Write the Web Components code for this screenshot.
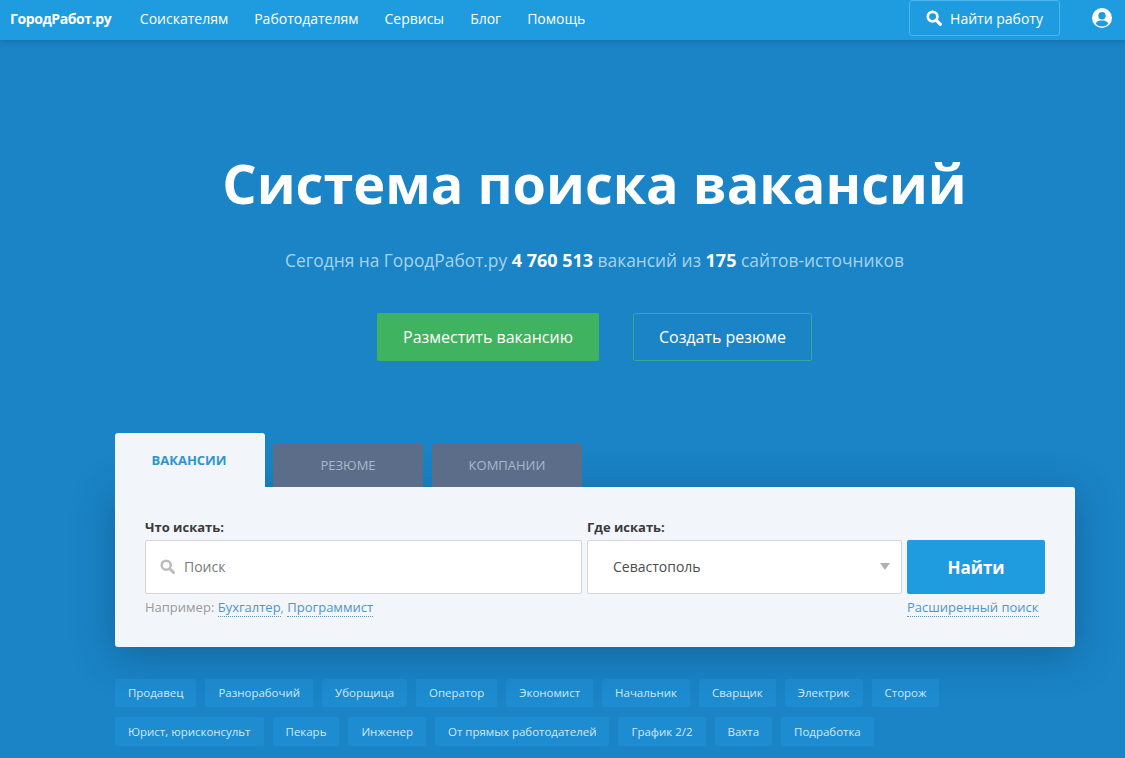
<!DOCTYPE html>
<html lang="ru">
<head>
<meta charset="utf-8">
<title>ГородРабот.ру</title>
<style>
html, body { margin: 0; height: 758px; overflow: hidden; }
body { background: #1a84c6; font-family: "Open Sans", "Noto Sans", sans-serif; color: #fff; }
</style>
</head>
<body>
<gr-header></gr-header>
<gr-hero></gr-hero>
<gr-search></gr-search>
<gr-tags></gr-tags>

<script>
const searchIcon = (size, color) => `<svg width="${size}" height="${size}" viewBox="0 0 16 16" aria-hidden="true"><circle cx="6.6" cy="6.6" r="4.8" fill="none" stroke="${color}" stroke-width="2.7"/><path d="M10.4 10.4L14.4 14.4" stroke="${color}" stroke-width="3.2" stroke-linecap="round"/></svg>`;

customElements.define('gr-header', class extends HTMLElement {
  constructor() {
    super();
    this.attachShadow({ mode: 'open' });
    const links = ['Соискателям', 'Работодателям', 'Сервисы', 'Блог', 'Помощь'];
    this.shadowRoot.innerHTML = `
<style>
:host { display: flex; align-items: center; box-sizing: border-box; height: 40px; padding-bottom: 4px; background: #1f9be0; box-shadow: 0 1px 6px rgba(20,60,100,.35); position: relative; font-size: 14px; }
.logo { font-weight: 700; font-size: 14px; margin-left: 10px; letter-spacing: -.4px; }
nav { display: flex; gap: 26px; margin-left: 28.5px; }
.find { display: flex; align-items: center; justify-content: center; gap: 8px; box-sizing: border-box; width: 151px; height: 36px; margin: 0 32px 0 auto; border: 1px solid #4db4ec; border-radius: 3px; }
.user { margin-right: 13px; display: block; }
</style>
<span class="logo">ГородРабот.ру</span>
<nav>${links.map(l => `<span>${l}</span>`).join('')}</nav>
<span class="find">${searchIcon(16, '#fff')}<span>Найти работу</span></span>
<svg class="user" width="20" height="20" viewBox="0 0 20 20" aria-hidden="true"><circle cx="10" cy="10" r="10" fill="#fff"/><circle cx="10" cy="7.8" r="3.7" fill="#1f9be0"/><path d="M3.6 15.6C5 13 7.6 12.6 10 12.6s5 .4 6.4 3C15 17.6 12.6 18.4 10 18.4s-5-.8-6.4-2.8z" fill="#1f9be0"/></svg>`;
  }
});

customElements.define('gr-hero', class extends HTMLElement {
  constructor() {
    super();
    this.attachShadow({ mode: 'open' });
    this.shadowRoot.innerHTML = `
<style>
:host { display: flex; flex-direction: column; align-items: center; width: 959px; margin-left: 115px; }
h1 { margin: 98px 0 0; font-size: 54px; line-height: 90px; font-weight: 700; white-space: nowrap; }
p { margin: 19px 0 0; font-size: 17.35px; line-height: 26px; color: #a5d4f0; white-space: nowrap; }
b { color: #fff; font-size: 18px; }
.btns { display: flex; gap: 34px; margin-top: 40px; }
.btn { display: flex; align-items: center; justify-content: center; box-sizing: border-box; height: 48px; border-radius: 2px; font-size: 16px; }
.green { width: 222px; background: #3fb35f; }
.line { width: 179px; border: 1px solid #2cb08c; }
</style>
<h1>Система поиска вакансий</h1>
<p>Сегодня на ГородРабот.ру <b>4 760 513</b> вакансий из <b>175</b> сайтов-источников</p>
<div class="btns"><span class="btn green">Разместить вакансию</span><span class="btn line">Создать резюме</span></div>`;
  }
});

customElements.define('gr-search', class extends HTMLElement {
  constructor() {
    super();
    this.attachShadow({ mode: 'open' });
    this.shadowRoot.innerHTML = `
<style>
:host { display: block; width: 960px; margin: 72px 0 0 115px; }
.tabs { display: flex; align-items: flex-end; height: 54px; position: relative; z-index: 1; }
.tab { display: flex; align-items: center; justify-content: center; width: 150px; height: 44px; margin-right: 9px; background: #5c6d8a; color: #a9b8cb; font-size: 13px; border-radius: 3px 3px 0 0; }
.tab.on { height: 54px; margin-right: 8px; padding-right: 2px; box-sizing: border-box; background: #f2f5fa; color: #2f94d0; font-weight: 700; }
.card { box-sizing: border-box; height: 160px; padding: 30px 30px 0; background: #f2f5fa; border-radius: 0 3px 3px 3px; box-shadow: 0 8px 40px rgba(10,50,90,.38); color: #3d3d3d; position: relative; }
.grid { display: grid; grid-template-columns: 437px 315px 138px; column-gap: 5px; }
label { font-size: 13px; font-weight: 700; line-height: 20px; height: 23px; color: #3a3a3a; }
.field { display: flex; align-items: center; box-sizing: border-box; height: 54px; padding-bottom: 1px; background: #fff; border: 1px solid #d4d6da; border-radius: 2px; font-size: 14px; color: #7a7a7a; }
.what { padding-left: 14px; gap: 9px; }
.what svg { display: block; }
.where { padding-left: 25px; color: #4c4c4c; justify-content: space-between; }
.arrow { width: 0; height: 0; margin-right: 11px; border: 5px solid transparent; border-top: 7px solid #b0b0b0; border-bottom: 0; }
.go { display: flex; align-items: center; justify-content: center; height: 54px; background: #1f9be0; color: #fff; border-radius: 2px; font-size: 17px; font-weight: 700; }
.hint { font-size: 13px; line-height: 18px; margin-top: 4px; color: #9a9a9a; white-space: nowrap; }
a { color: #4f95c9; border-bottom: 1px dotted #4f95c9; }
</style>
<div class="tabs">
  <div class="tab on"><span>ВАКАНСИИ</span></div>
  <div class="tab"><span>РЕЗЮМЕ</span></div>
  <div class="tab"><span>КОМПАНИИ</span></div>
</div>
<div class="card">
  <div class="grid">
    <label>Что искать:</label><label>Где искать:</label><span></span>
    <div class="field what">${searchIcon(15, '#bcbcbc')}<span>Поиск</span></div>
    <div class="field where"><span>Севастополь</span><i class="arrow"></i></div>
    <div class="go">Найти</div>
    <div class="hint">Например: <a>Бухгалтер</a>, <a>Программист</a></div>
    <span></span>
    <div class="hint"><a>Расширенный поиск</a></div>
  </div>
</div>`;
  }
});

customElements.define('gr-tags', class extends HTMLElement {
  constructor() {
    super();
    this.attachShadow({ mode: 'open' });
    const rows = [
      ['Продавец', 'Разнорабочий', 'Уборщица', 'Оператор', 'Экономист', 'Начальник', 'Сварщик', 'Электрик', 'Сторож'],
      ['Юрист, юрисконсульт', 'Пекарь', 'Инженер', 'От прямых работодателей', 'График 2/2', 'Вахта', 'Подработка']
    ];
    this.shadowRoot.innerHTML = `
<style>
:host { display: flex; flex-direction: column; gap: 10px; margin: 32px 0 0 115px; }
.row { display: flex; gap: 9px; }
span { display: flex; align-items: center; box-sizing: border-box; height: 28px; padding: 0 13px 1px; background: #1e8cd0; border-radius: 2px; font-size: 11.47px; color: #d2e9f8; white-space: nowrap; }
.row + .row span { height: 29px; }
</style>
${rows.map(r => `<div class="row">${r.map(t => `<span>${t}</span>`).join('')}</div>`).join('')}`;
  }
});
</script>
</body>
</html>
